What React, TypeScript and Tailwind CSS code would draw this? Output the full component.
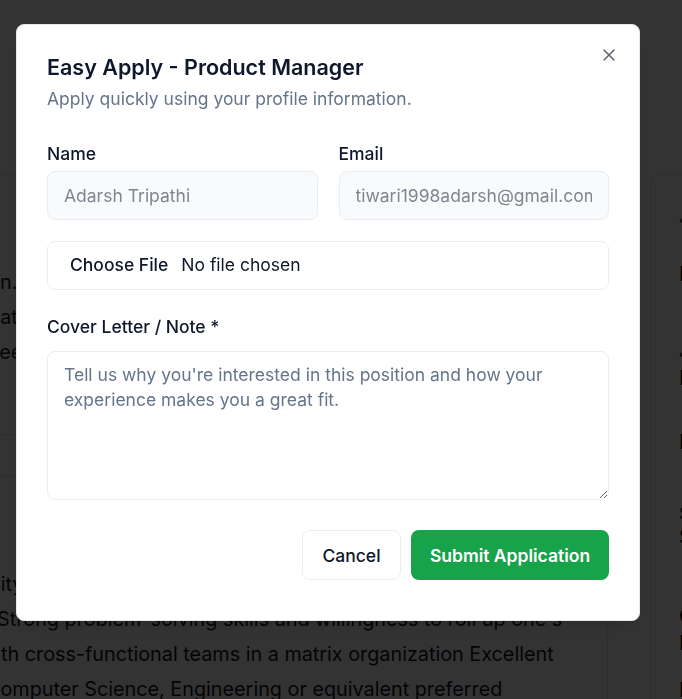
import React from 'react';
import { X } from 'lucide-react';

const BackgroundPage: React.FC = () => {
  return (
    <div className="h-[699px] bg-white text-[19.8px] leading-[35px] text-[#111827] overflow-hidden whitespace-nowrap">
      <div className="h-[174px]" />
      <div className="flex gap-[42px]">
        {/* Job description card */}
        <div className="-ml-[40px] w-[648px] shrink-0 rounded-lg border border-gray-200 pl-[39px]">
          <div className="pt-[90px]">
            <p className="-ml-[23px]">tion.</p>
            <p className="-ml-[18px]">that you will</p>
            <p className="-ml-[7px]">teed to succeed</p>
          </div>
          <div className="h-[64px]" />
          <div className="h-[41px] border-t border-gray-200" />
          <div className="border-t border-gray-200 pt-[91px]">
            <p className="-ml-[32px]">ability</p>
            <p className="-ml-[3px]">Strong problem-solving skills and willingness to roll up one's</p>
            <p className="-ml-[20px]">with cross-functional teams in a matrix organization Excellent</p>
            <p className="-ml-[14px]">Computer Science, Engineering or equivalent preferred</p>
          </div>
        </div>
        {/* Sidebar card */}
        <div className="w-[300px] shrink-0 rounded-lg border border-gray-200 pl-[28px] pt-[30px]">
          <p className="text-base leading-[24px]">Job Type</p>
          <p className="mt-[30px] leading-[30px]">Full-time</p>
          <p className="mt-[50px] text-base leading-[24px]">Job Location</p>
          <p className="leading-[30px]">Remote</p>
          <p className="mt-[34px] leading-[30px]">Industry</p>
          <p className="mt-[44px] text-base leading-[24px]">Salary</p>
          <p className="leading-[24px]">Salary range</p>
          <p className="mt-[52px] leading-[30px]">Company</p>
          <p className="leading-[24px]">Posted</p>
          <p className="mt-[20px] leading-[30px]">Remote</p>
        </div>
      </div>
    </div>
  );
};

const App: React.FC = () => {
  return (
    <div className="relative h-[699px] w-full overflow-hidden font-['Inter',sans-serif]">
      <BackgroundPage />

      {/* Overlay */}
      <div className="fixed inset-0 bg-black/80" />

      {/* Dialog */}
      <div className="fixed left-[16px] top-[24px] w-[624px] rounded-lg border border-gray-200 bg-white px-[30px] pt-[28px] pb-[40px] shadow-lg">
        <button className="absolute right-[20px] top-[20px] text-[#5b6270]">
          <X className="h-[20px] w-[20px]" strokeWidth={1.8} />
        </button>

        <div className="flex flex-col gap-[6px]">
          <h2 className="text-[21.5px] font-semibold leading-7 text-[#0f172a]">Easy Apply - Product Manager</h2>
          <p className="text-[17.5px] leading-6 text-[#64748b]">Apply quickly using your profile information.</p>
        </div>

        <form className="mt-[31px] flex flex-col text-[17.5px]">
          <div className="grid grid-cols-2 gap-[21px]">
            <div className="flex flex-col gap-[5px]">
              <label className="font-medium leading-6 text-[#0f172a]">Name</label>
              <input
                disabled
                value="Adarsh Tripathi"
                className="h-[49px] w-full rounded-lg border border-[#e9eef4] bg-[#f8fafc] px-4 text-[#80868f]"
              />
            </div>
            <div className="flex flex-col gap-[5px]">
              <label className="font-medium leading-6 text-[#0f172a]">Email</label>
              <input
                disabled
                value="tiwari1998adarsh@gmail.com"
                className="h-[49px] w-full rounded-lg border border-[#e9eef4] bg-[#f8fafc] px-4 text-[#80868f]"
              />
            </div>
          </div>

          <input
            type="file"
            className="mt-[21px] h-[49px] w-full rounded-lg border border-[#e9eef4] bg-white px-4 text-[#0f172a] file:mr-[7px] file:h-full file:border-0 file:bg-transparent file:px-[6px] file:text-[17.5px] file:font-medium file:text-[#0f172a]"
          />

          <label className="mt-[25px] font-medium leading-6 text-[#0f172a]">Cover Letter / Note *</label>
          <textarea
            placeholder="Tell us why you're interested in this position and how your experience makes you a great fit."
            className="mt-[12px] h-[149px] w-full rounded-lg border border-[#e9eef4] bg-white px-4 py-[10px] leading-[25px] text-[#0f172a] placeholder:text-[#64748b]"
          />

          <div className="mt-[30px] flex justify-end gap-[10px]">
            <button
              type="button"
              className="h-[50px] w-[99px] rounded-lg border border-[#e9eef4] bg-white pt-[3px] font-medium text-[#0f172a]"
            >
              Cancel
            </button>
            <button
              type="button"
              className="h-[50px] w-[198px] rounded-lg bg-[#16a34a] pt-[3px] font-semibold text-white"
            >
              Submit Application
            </button>
          </div>
        </form>
      </div>
    </div>
  );
};

export default App;
